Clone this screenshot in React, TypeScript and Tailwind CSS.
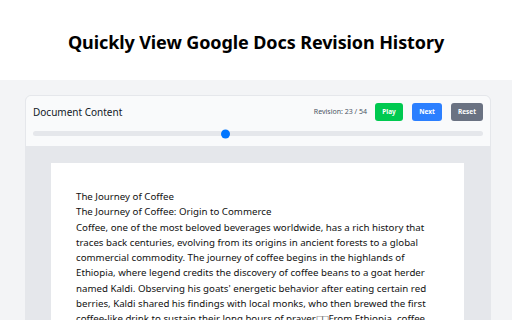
const lines = [
  "The Journey of Coffee",
  "The Journey of Coffee: Origin to Commerce",
  "Coffee, one of the most beloved beverages worldwide, has a rich history that",
  "traces back centuries, evolving from its origins in ancient forests to a global",
  "commercial commodity. The journey of coffee begins in the highlands of",
  "Ethiopia, where legend credits the discovery of coffee beans to a goat herder",
  "named Kaldi. Observing his goats' energetic behavior after eating certain red",
  "berries, Kaldi shared his findings with local monks, who then brewed the first",
  "coffee-like drink to sustain their long hours of prayer.\u25A1\u25A1From Ethiopia, coffee",
  "spread to the Arabian Peninsula, where it was cultivated and traded.",
];

export default function App() {
  return (
    <div className="h-[320px] w-[512px] overflow-hidden bg-[#f3f4f6] font-['Noto_Sans',sans-serif]">
      {/* Заголовок */}
      <header className="flex h-[80px] items-center justify-center bg-white pt-[5px]">
        <h1 className="text-[18px] font-bold tracking-[-0.1px] text-black">
          Quickly View Google Docs Revision History
        </h1>
      </header>

      <main className="pt-[15px] pr-[21px] pl-[25px]">
        <div className="overflow-hidden rounded-t-md border border-[#e5e7eb] bg-[#e5e7eb]">
          {/* Панель управления */}
          <div className="bg-[#f9fafb] px-[7px] pt-[7px] pb-[10px]">
            <div className="flex items-center justify-between">
              <span className="text-[10px] text-[#111827]">Document Content</span>
              <div className="flex items-center">
                <span className="mr-[8px] text-[7px] text-[#4b5563]">Revision: 23 / 54</span>
                <button className="h-[18px] w-[28px] rounded-[3px] bg-[#00c950] text-[6.5px] font-bold text-white">
                  Play
                </button>
                <button className="ml-[9px] h-[18px] w-[30px] rounded-[3px] bg-[#2b7fff] text-[6.5px] font-bold text-white">
                  Next
                </button>
                <button className="ml-[9px] h-[18px] w-[32px] rounded-[3px] bg-[#6a7282] text-[6.5px] font-bold text-white">
                  Reset
                </button>
              </div>
            </div>
            <div className="relative mt-[10px] h-[5px] rounded-full bg-[#e5e7eb]">
              <span className="absolute top-1/2 left-[188px] h-[9px] w-[9px] -translate-y-1/2 rounded-full bg-[#0075ff]" />
            </div>
          </div>

          {/* Документ */}
          <div className="pt-[17px] pr-[26px] pl-[25px]">
            <div className="h-[200px] overflow-hidden bg-white pt-[26px] pl-[25px] text-[9.7px] leading-[15.3px] text-[#111]">
              {lines.map((line, i) => (
                <p key={i} className="whitespace-nowrap">
                  {line}
                </p>
              ))}
            </div>
          </div>
        </div>
      </main>
    </div>
  );
}
